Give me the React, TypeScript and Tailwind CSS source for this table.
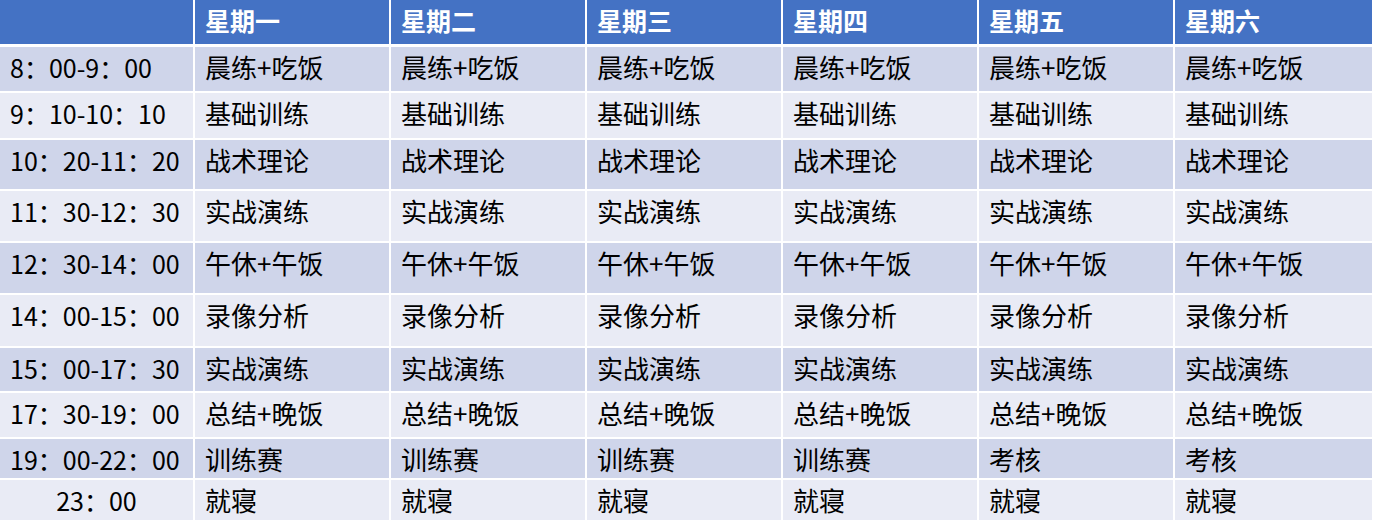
const days = ['星期一', '星期二', '星期三', '星期四', '星期五', '星期六'];

const rows = [
  { time: '8：00-9：00', h: 'h-[44px]', items: Array(6).fill('晨练+吃饭') },
  { time: '9：10-10：10', h: 'h-[45px]', items: Array(6).fill('基础训练') },
  { time: '10：20-11：20', h: 'h-[49px]', items: Array(6).fill('战术理论') },
  { time: '11：30-12：30', h: 'h-[50px]', items: Array(6).fill('实战演练') },
  { time: '12：30-14：00', h: 'h-[50px]', items: Array(6).fill('午休+午饭') },
  { time: '14：00-15：00', h: 'h-[51px]', items: Array(6).fill('录像分析') },
  { time: '15：00-17：30', h: 'h-[43px]', items: Array(6).fill('实战演练') },
  { time: '17：30-19：00', h: 'h-[44px]', items: Array(6).fill('总结+晚饭') },
  { time: '19：00-22：00', h: 'h-[39px]', items: ['训练赛', '训练赛', '训练赛', '训练赛', '考核', '考核'] },
  { time: '23：00', h: 'h-[40px]', items: Array(6).fill('就寝'), center: true },
];

const cols = 'grid grid-cols-[193px_repeat(5,194px)_197px] gap-x-[2px]';

export default function App() {
  return (
    <div className="w-[1374px] h-[523px] bg-white font-['Noto_Sans_CJK_SC','Noto_Sans',sans-serif] text-[25px] leading-[34px] text-black">
      <div className={`${cols} h-[44px] mb-[3px]`}>
        <div className="bg-[#4472c4]" />
        {days.map((d) => (
          <div key={d} className="bg-[#4472c4] pl-[10px] pt-[3px] font-bold text-white">
            {d}
          </div>
        ))}
      </div>
      <div className="flex flex-col gap-y-[2px]">
        {rows.map((r, i) => {
          const bg = i % 2 === 0 ? 'bg-[#cfd5ea]' : 'bg-[#e9ebf5]';
          return (
            <div key={i} className={`${cols} ${r.h}`}>
              <div className={`${bg} pt-[3px] ${r.center ? 'text-center' : 'pl-[10px]'} whitespace-nowrap`}>
                {r.time}
              </div>
              {r.items.map((t, j) => (
                <div key={j} className={`${bg} pl-[10px] pt-[3px] text-[26px] whitespace-nowrap`}>
                  {t}
                </div>
              ))}
            </div>
          );
        })}
      </div>
    </div>
  );
}
